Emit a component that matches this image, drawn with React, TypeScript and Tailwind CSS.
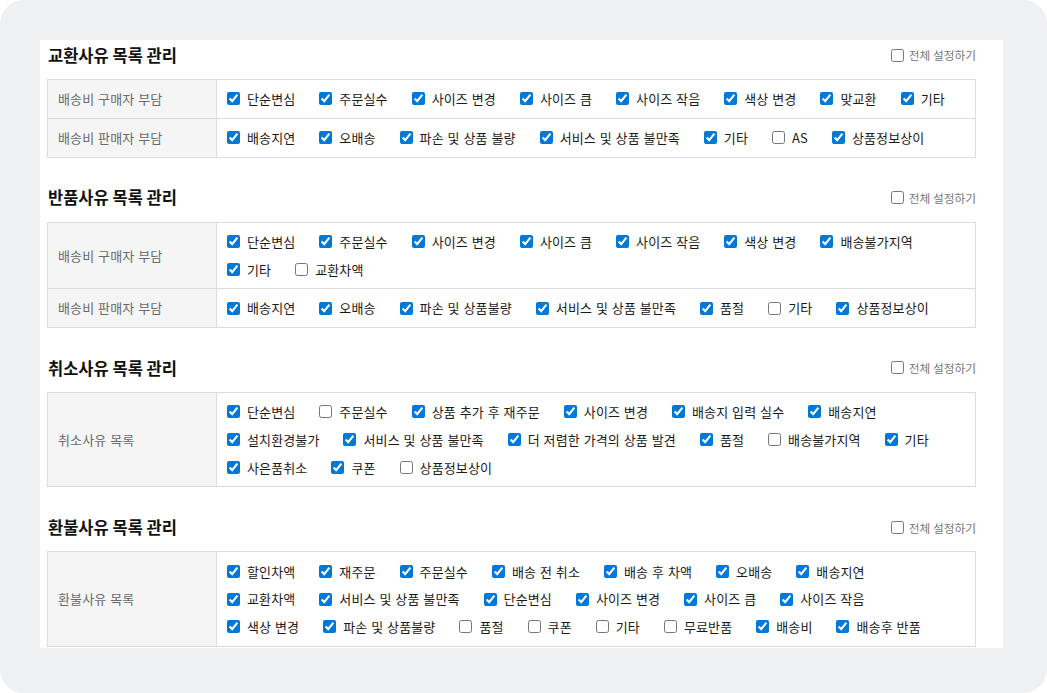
import React from "react";

type Item = [string, boolean];
type Row = { label: string; items: Item[] };
type Section = { title: string; rows: Row[] };

const sections: Section[] = [
  {
    title: "교환사유 목록 관리",
    rows: [
      {
        label: "배송비 구매자 부담",
        items: [
          ["단순변심", true],
          ["주문실수", true],
          ["사이즈 변경", true],
          ["사이즈 큼", true],
          ["사이즈 작음", true],
          ["색상 변경", true],
          ["맞교환", true],
          ["기타", true],
        ],
      },
      {
        label: "배송비 판매자 부담",
        items: [
          ["배송지연", true],
          ["오배송", true],
          ["파손 및 상품 불량", true],
          ["서비스 및 상품 불만족", true],
          ["기타", true],
          ["AS", false],
          ["상품정보상이", true],
        ],
      },
    ],
  },
  {
    title: "반품사유 목록 관리",
    rows: [
      {
        label: "배송비 구매자 부담",
        items: [
          ["단순변심", true],
          ["주문실수", true],
          ["사이즈 변경", true],
          ["사이즈 큼", true],
          ["사이즈 작음", true],
          ["색상 변경", true],
          ["배송불가지역", true],
          ["기타", true],
          ["교환차액", false],
        ],
      },
      {
        label: "배송비 판매자 부담",
        items: [
          ["배송지연", true],
          ["오배송", true],
          ["파손 및 상품불량", true],
          ["서비스 및 상품 불만족", true],
          ["품절", true],
          ["기타", false],
          ["상품정보상이", true],
        ],
      },
    ],
  },
  {
    title: "취소사유 목록 관리",
    rows: [
      {
        label: "취소사유 목록",
        items: [
          ["단순변심", true],
          ["주문실수", false],
          ["상품 추가 후 재주문", true],
          ["사이즈 변경", true],
          ["배송지 입력 실수", true],
          ["배송지연", true],
          ["설치환경불가", true],
          ["서비스 및 상품 불만족", true],
          ["더 저렴한 가격의 상품 발견", true],
          ["품절", true],
          ["배송불가지역", false],
          ["기타", true],
          ["사은품취소", true],
          ["쿠폰", true],
          ["상품정보상이", false],
        ],
      },
    ],
  },
  {
    title: "환불사유 목록 관리",
    rows: [
      {
        label: "환불사유 목록",
        items: [
          ["할인차액", true],
          ["재주문", true],
          ["주문실수", true],
          ["배송 전 취소", true],
          ["배송 후 차액", true],
          ["오배송", true],
          ["배송지연", true],
          ["교환차액", true],
          ["서비스 및 상품 불만족", true],
          ["단순변심", true],
          ["사이즈 변경", true],
          ["사이즈 큼", true],
          ["사이즈 작음", true],
          ["색상 변경", true],
          ["파손 및 상품불량", true],
          ["품절", false],
          ["쿠폰", false],
          ["기타", false],
          ["무료반품", false],
          ["배송비", true],
          ["배송후 반품", true],
        ],
      },
    ],
  },
];

function Check({ on }: { on: boolean }) {
  return (
    <input
      type="checkbox"
      defaultChecked={on}
      className="m-0 h-[13px] w-[13px] shrink-0 accent-[#0078d7]"
    />
  );
}

function SectionBlock({ s, first }: { s: Section; first: boolean }) {
  return (
    <div className={first ? "" : "mt-[25px]"}>
      <div className="mb-[9px] flex h-[30px] items-center justify-between">
        <h2 className="pl-px text-[16.5px] font-bold leading-none text-[#111]">
          {s.title}
        </h2>
        <label className="flex items-center gap-[5px] text-[11.7px] leading-none text-[#777]">
          <Check on={false} />
          <span>전체 설정하기</span>
        </label>
      </div>
      <div className="border border-[#dddddd]">
        {s.rows.map((r, i) => (
          <div
            key={i}
            className={`flex ${i > 0 ? "border-t border-[#dddddd]" : ""}`}
          >
            <div className="flex w-[169px] shrink-0 items-center border-r border-[#dddddd] bg-[#f5f5f5] pl-[10px] text-[13px] tracking-[0.12px] text-[#6a6a6a] [word-spacing:0.8px]">
              {r.label}
            </div>
            <div className="flex flex-1 flex-wrap py-[5px] pl-[10px] pr-[3px]">
              {r.items.map(([t, on], j) => (
                <label
                  key={j}
                  className="mr-[24px] flex h-[27.8px] items-center gap-[7px] text-[13px] tracking-[0.12px] text-[#1a1a1a] [word-spacing:0.8px]"
                >
                  <Check on={on} />
                  <span className="whitespace-nowrap">{t}</span>
                </label>
              ))}
            </div>
          </div>
        ))}
      </div>
    </div>
  );
}

export default function App() {
  return (
    <div className="bg-white font-['Noto_Sans_CJK_KR','Noto_Sans',sans-serif]">
      <div className="h-[693px] w-[1047px] overflow-hidden rounded-[24px] bg-[#eff0f2] pl-[40px] pt-[40px]">
        <div className="h-[608px] w-[963px] overflow-hidden bg-white pl-[7px] pr-[27px]">
          {sections.map((s, i) => (
            <SectionBlock key={i} s={s} first={i === 0} />
          ))}
        </div>
      </div>
    </div>
  );
}
